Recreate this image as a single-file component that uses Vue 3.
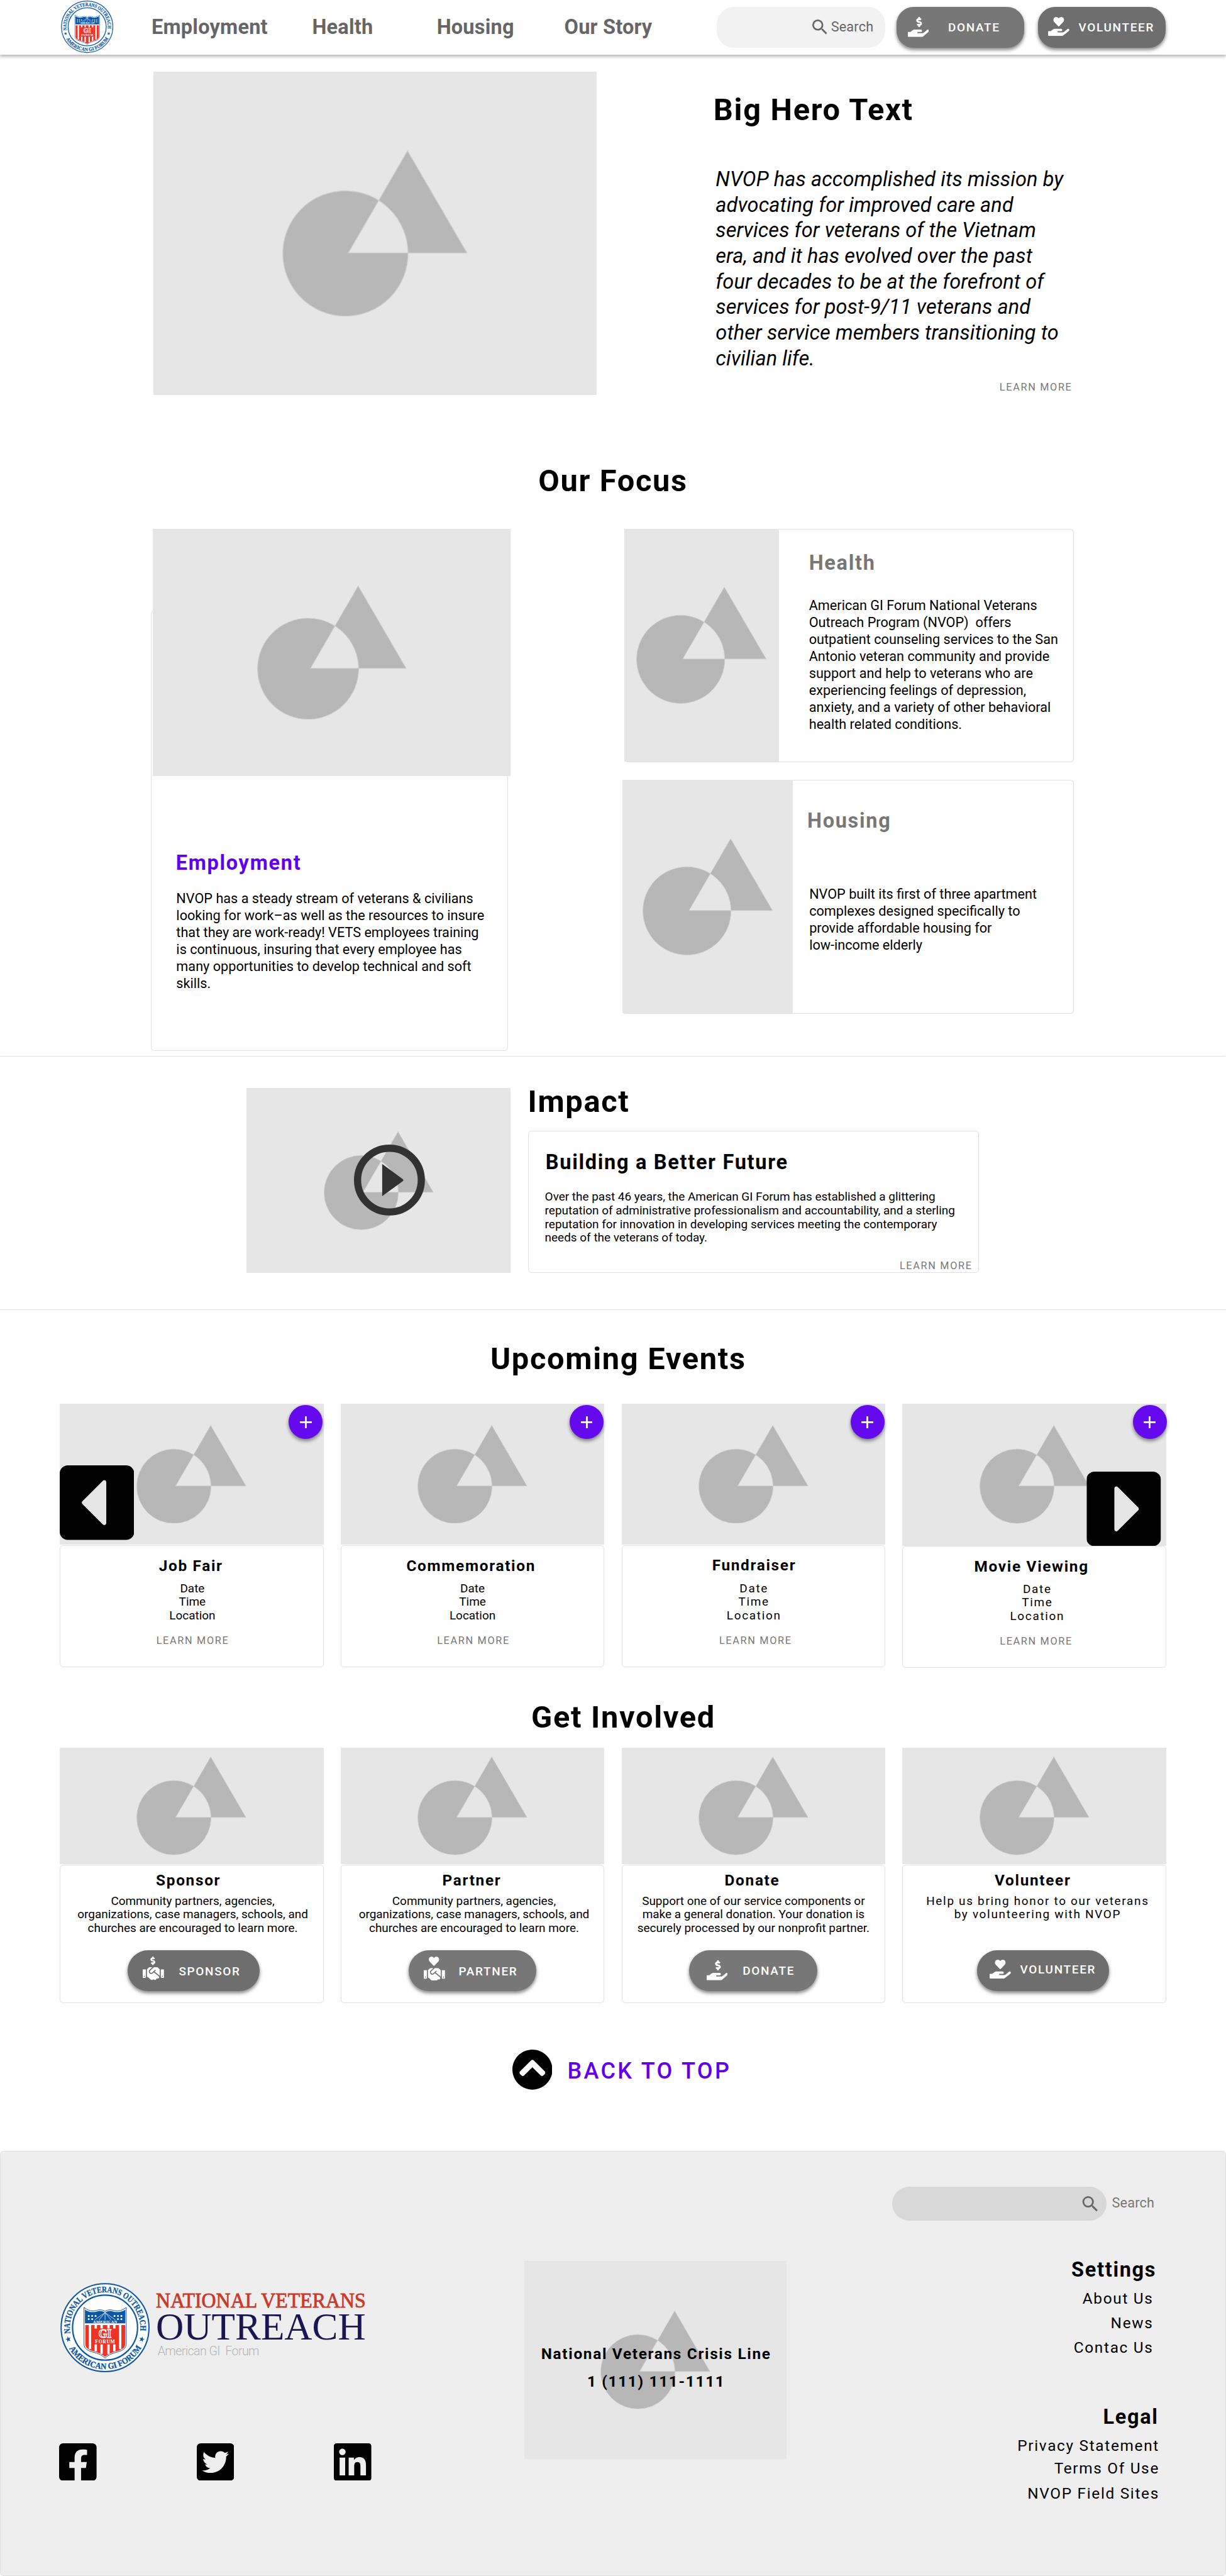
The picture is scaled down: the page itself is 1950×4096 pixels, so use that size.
<script setup>
import { h } from 'vue'

const HAND = 'M565.3 328.1c-11.8-10.7-30.2-10-42.6 0L430.3 402c-11.3 9.1-25.4 14-40 14H272c-8.8 0-16-7.2-16-16s7.2-16 16-16h78.3c15.9 0 30.7-10.9 33.3-26.6 3.3-20-12.1-37.4-31.6-37.4H192c-27 0-53.1 9.3-74.1 26.3L71.4 384H16c-8.8 0-16 7.2-16 16v96c0 8.8 7.2 16 16 16h356.8c14.5 0 28.6-4.9 40-14L564 377c15.2-12.1 16.4-35.3 1.3-48.9z'
const HAND_NARROW = 'M533.9 328.1c-11.2-10.7-28.5-10-40.3 0L406.4 402c-10.7 9.1-24 14-37.8 14H256.9c-8.3 0-15.1-7.2-15.1-16s6.8-16 15.1-16h73.9c15.1 0 29-10.9 31.4-26.6 3.1-20-11.5-37.4-29.8-37.4H181.3c-25.5 0-50.2 9.3-69.9 26.3L67.5 384H15.1C6.8 384 0 391.2 0 400v96c0 8.8 6.8 16 15.1 16H352c13.7 0 27-4.9 37.8-14l142.8-121c14.4-12.1 15.5-35.3 1.3-48.9z'
const HEART = 'M275.3 250.5c7 7.4 18.4 7.4 25.5 0l108.9-114.2c31.6-33.2 29.8-88.2-5.6-118.8-30.8-26.7-76.7-21.9-104.9 7.7L288 36.9l-11.1-11.6C248.7-4.4 202.8-9.2 172 17.5c-35.3 30.6-37.2 85.6-5.6 118.8l108.9 114.2z'
const DOLLAR = 'M257.6 144.3l50 14.3c3.6 1 6.1 4.4 6.1 8.1 0 4.6-3.8 8.4-8.4 8.4h-32.8c-3.6 0-7.1-.8-10.3-2.2-4.8-2.2-10.4-1.7-14.1 2l-17.5 17.5c-5.3 5.3-4.7 14.3 1.5 18.4 9.5 6.3 20.3 10.1 31.8 11.5V240c0 8.8 7.2 16 16 16h16c8.8 0 16-7.2 16-16v-17.6c30.3-3.6 53.3-31 49.3-63-2.9-23-20.7-41.3-42.9-47.7l-50-14.3c-3.6-1-6.1-4.4-6.1-8.1 0-4.6 3.8-8.4 8.4-8.4h32.8c3.6 0 7.1.8 10.3 2.2 4.8 2.2 10.4 1.7 14.1-2l17.5-17.5c5.3-5.3 4.7-14.3-1.5-18.4-9.5-6.3-20.3-10.1-31.8-11.5V16c0-8.8-7.2-16-16-16h-16c-8.8 0-16 7.2-16 16v17.6c-30.3 3.6-53.3 31-49.3 63 2.9 23 20.6 41.3 42.9 47.7z'
const SHAKE = 'M434.7 64h-85.9c-8 0-15.7 3-21.6 8.4l-98.3 90c-.1.1-.2.3-.3.4-16.6 15.6-16.3 40.5-2.1 56 12.7 13.9 39.4 17.6 56.1 2.7.1-.1.3-.1.4-.2l79.9-73.2c6.5-5.9 16.7-5.5 22.6 1 6 6.5 5.5 16.6-1 22.6l-26.1 23.9L504 313.8c2.9 2.4 5.5 5 7.9 7.7V128l-54.6-54.6c-5.9-6-14.1-9.4-22.6-9.4zM544 128.2v223.9c0 17.7 14.3 32 32 32h64V128.2h-96zm48 223.9c-8.8 0-16-7.2-16-16s7.2-16 16-16 16 7.2 16 16-7.2 16-16 16zM0 384h64c17.7 0 32-14.3 32-32V128.2H0V384zm48-63.9c8.8 0 16 7.2 16 16s-7.2 16-16 16-16-7.2-16-16c0-8.9 7.2-16 16-16zm435.9 18.6L334.6 217.5l-30 27.5c-29.7 27.1-75.2 24.5-101.7-4.4-26.9-29.4-24.8-74.9 4.4-101.7L289.1 64h-83.8c-8.5 0-16.6 3.4-22.6 9.4L128 128v223.9h18.3l90.5 81.9c27.4 22.3 67.7 18.1 90-9.3l.2-.2 17.9 15.5c15.9 13 39.4 10.5 52.3-5.4l31.4-38.6 5.4 4.4c13.7 11.1 33.9 9.1 45-4.7l9.5-11.7c11.2-13.8 9.1-33.9-4.6-45.1z'
const SQUARE_FB = 'M400 32H48A48 48 0 0 0 0 80v352a48 48 0 0 0 48 48h137.25V327.69h-63V256h63v-54.64c0-62.15 37-96.48 93.67-96.48 27.14 0 55.52 4.84 55.52 4.84v61h-31.27c-30.81 0-40.42 19.12-40.42 38.73V256h68.78l-11 71.69h-57.78V480H400a48 48 0 0 0 48-48V80a48 48 0 0 0-48-48z'
const SQUARE_TW = 'M400 32H48C21.5 32 0 53.5 0 80v352c0 26.5 21.5 48 48 48h352c26.5 0 48-21.5 48-48V80c0-26.5-21.5-48-48-48zm-48.9 158.8c.2 2.8.2 5.7.2 8.5 0 86.7-66 186.6-186.6 186.6-37.2 0-71.7-10.8-100.7-29.4 5.3.6 10.4.8 15.8.8 30.7 0 58.9-10.4 81.4-28-28.8-.6-53-19.5-61.3-45.5 10.1 1.5 19.2 1.5 29.6-1.2-30-6.1-52.5-32.5-52.5-64.4v-.8c8.7 4.9 18.9 7.9 29.6 8.3a65.447 65.447 0 0 1-29.2-54.6c0-12.2 3.2-23.4 8.9-33.1 32.3 39.8 80.8 65.8 135.2 68.6-9.3-44.5 24-80.6 64-80.6 18.9 0 35.9 7.9 47.9 20.7 14.8-2.8 29-8.3 41.6-15.8-4.9 15.2-15.2 28-28.8 36.1 13.2-1.4 26-5.1 37.8-10.2-8.9 13.1-20.1 24.7-32.9 34z'
const SQUARE_IN = 'M416 32H31.9C14.3 32 0 46.5 0 64.3v383.4C0 465.5 14.3 480 31.9 480H416c17.6 0 32-14.5 32-32.3V64.3c0-17.8-14.4-32.3-32-32.3zM135.4 416H69V202.2h66.5V416zm-33.2-243c-21.3 0-38.5-17.3-38.5-38.5S80.9 96 102.2 96c21.2 0 38.5 17.3 38.5 38.5 0 21.3-17.2 38.5-38.5 38.5zm282.1 243h-66.4V312c0-24.8-.5-56.7-34.5-56.7-34.6 0-39.9 27-39.9 54.9V416h-66.4V202.2h63.7v29.2h.9c8.9-16.8 30.6-34.5 62.9-34.5 67.2 0 79.7 44.3 79.7 101.9V416z'
const CARET = 'M400 480H48c-26.51 0-48-21.49-48-48V80c0-26.51 21.49-48 48-48h352c26.51 0 48 21.49 48 48v352c0 26.51-21.49 48-48 48zM259.515 124.485l-123.03 123.03c-4.686 4.686-4.686 12.284 0 16.971l123.029 123.029c7.56 7.56 20.485 2.206 20.485-8.485V132.971c.001-10.691-12.925-16.045-20.484-8.486z'
const CHEVRON = 'M8 256C8 119 119 8 256 8s248 111 248 248-111 248-248 248S8 393 8 256zm231-113.9L103.5 277.6c-9.4 9.4-9.4 24.6 0 33.9l17 17c9.4 9.4 24.6 9.4 33.9 0L256 226.9l101.6 101.6c9.4 9.4 24.6 9.4 33.9 0l17-17c9.4-9.4 9.4-24.6 0-33.9L273 142.1c-9.4-9.4-24.6-9.4-34 0z'
const SEARCH = 'M15.5 14h-.79l-.28-.27A6.47 6.47 0 0 0 16 9.5 6.5 6.5 0 1 0 9.5 16c1.61 0 3.09-.59 4.23-1.57l.27.28v.79l5 4.99L20.49 19l-4.99-5zm-6 0C7.01 14 5 11.99 5 9.5S7.01 5 9.5 5 14 7.01 14 9.5 11.99 14 9.5 14z'

/* Round organisation seal, drawn on a 104-unit square. */
const BLUE = '#0d56a6'
const RED = '#ee3224'
const SERIF = "'Liberation Serif', serif"
const STAR = 'M0-3.4L.8-1.1H3.2L1.3.4L2 2.8L0 1.4L-2 2.8L-1.3.4L-3.2-1.1H-.8Z'
const smallStars = [[33, 38.4], [37, 38.4], [41, 38.4], [33, 42], [37, 42], [71, 38.4], [67, 38.4], [63, 38.4], [71, 42], [67, 42]]
const Seal = () => {
  const p = (d, attrs) => h('path', { d, ...attrs })
  const onArc = (id, len, start, text) =>
    h('text', { fill: BLUE, stroke: BLUE, 'stroke-width': 0.25, 'font-family': SERIF, 'font-weight': 700, 'font-size': 10 }, [
      h('textPath', { href: id, startOffset: start, textLength: len, lengthAdjust: 'spacingAndGlyphs' }, text),
    ])
  const label = (y, size, attrs, text) =>
    h('text', { x: 52, y, 'font-size': size, 'font-weight': 700, 'font-family': SERIF, 'text-anchor': 'middle', ...attrs }, text)
  return h('svg', { viewBox: '0 0 104 104' }, [
    h('circle', { cx: 52, cy: 52, r: 51.1, fill: '#fff', stroke: BLUE, 'stroke-width': 1.5 }),
    h('circle', { cx: 52, cy: 52, r: 37.8, fill: 'none', stroke: BLUE, 'stroke-width': 1.6 }),
    onArc('#arc-top', 139, 4, 'NATIONAL VETERANS OUTREACH'),
    onArc('#arc-bottom', 102, 9, 'AMERICAN GI FORUM'),
    p(STAR, { fill: BLUE, transform: 'translate(9.2 65.5) rotate(-15)' }),
    p(STAR, { fill: BLUE, transform: 'translate(94.8 65.5) rotate(15)' }),
    p('M27.5 28.5Q34 34 42 32Q47 30 52 33Q57 30 62 32Q70 34 76.7 28.5V72Q76 78 66 80.5Q56 83 52 87.5Q48 83 38 80.5Q28 78 27.5 72Z', { fill: '#fff', stroke: BLUE, 'stroke-width': 0.7 }),
    p('M28.6 31Q35 35.3 42.5 33.2Q47 31.6 52 34.4Q57 31.6 61.5 33.2Q69 35.3 75.6 31V47H28.6Z', { fill: BLUE }),
    p('M52 34.5L40 43M52 34.5L45 43M52 34.5V43M52 34.5L59 43M52 34.5L64 43', { fill: 'none', stroke: '#cfe0f2', 'stroke-width': 0.7 }),
    ...smallStars.map(([x, y]) => h('circle', { cx: x, cy: y, r: 1.1, fill: '#fff' })),
    label(46.6, 4.6, { fill: '#fff', textLength: 28 }, 'AMERICAN'),
    p('M29 49H75.4V72Q75 77 65.5 79.5Q56 82 52 86Q48 82 38.5 79.5Q29.5 77 29 72Z', { fill: RED }),
    p('M34.4 49V77M41.2 49V79.6M48 49V82.5M56 49V82.5M62.8 49V79.6M69.6 49V77', { stroke: '#fff', 'stroke-width': 2.7 }),
    p('M39.5 53H64.5V71.5H39.5Z', { fill: RED }),
    label(63.6, 13, { fill: RED, stroke: '#fff', 'stroke-width': 0.9 }, 'GI'),
    label(70.4, 5.6, { fill: '#fff', textLength: 23 }, 'FORUM'),
  ])
}

const heroText = `NVOP has accomplished its mission by
advocating for improved care and
services for veterans of the Vietnam
era, and it has evolved over the past
four decades to be at the forefront of
services for post-9/11 veterans and
other service members transitioning to
civilian life.`
const employmentText = `NVOP has a steady stream of veterans & civilians
looking for work–as well as the resources to insure
that they are work-ready! VETS employees training
is continuous, insuring that every employee has
many opportunities to develop technical and soft
skills.`
const healthText = `American GI Forum National Veterans
Outreach Program (NVOP)\u00a0 offers
outpatient counseling services to the San
Antonio veteran community and provide
support and help to veterans who are
experiencing feelings of depression,
anxiety, and a variety of other behavioral
health related conditions.`
const housingText = `NVOP built its first of three apartment
complexes designed specifically to
provide affordable housing for
low-income elderly`
const impactText = `Over the past 46 years, the American GI Forum has established a glittering
reputation of administrative professionalism and accountability, and a sterling
reputation for innovation in developing services meeting the contemporary
needs of the veterans of today.`

const events = [
  { title: 'Job Fair', cls: 'e1' },
  { title: 'Commemoration', cls: 'e2' },
  { title: 'Fundraiser', cls: 'e3' },
  { title: 'Movie Viewing', cls: 'e4' },
]
const partnerText = `Community partners, agencies,
organizations, case managers, schools, and
churches are encouraged to learn more.`
const ways = [
  { title: 'Sponsor', cls: 'w1', icon: 'sponsor', text: partnerText },
  { title: 'Partner', cls: 'w2', icon: 'partner', text: partnerText },
  {
    title: 'Donate', cls: 'w3', icon: 'donate',
    text: `Support one of our service components or
make a general donation. Your donation is
securely processed by our nonprofit partner.`,
  },
  {
    title: 'Volunteer', cls: 'w4', icon: 'volunteer',
    text: `Help us bring honor to our veterans
by volunteering with NVOP`,
  },
]
const social = [SQUARE_FB, SQUARE_TW, SQUARE_IN]
</script>

<template>
  <div class="page">
    <svg class="defs" width="0" height="0" aria-hidden="true">
      <defs>
        <path id="arc-top" d="M12.4 62.5A41 41 0 1 1 91.6 62.5" />
        <path id="arc-bottom" d="M6.5 68A48.2 48.2 0 0 0 97.5 68" />
      </defs>
      <symbol id="shape" viewBox="-1 -1 352 316">
        <path
          d="M0 195a119 119 0 1 0 238 0a119 119 0 1 0 -238 0zM124.5 194L237 0L350 194z"
          fill="#b7b7b7" fill-rule="evenodd" stroke="#cdcdcd" stroke-width="1.6"
        />
      </symbol>
      <symbol id="donate" viewBox="0 0 544 512">
        <path :d="DOLLAR" /><path :d="HAND_NARROW" />
      </symbol>
      <symbol id="volunteer" viewBox="0 0 576 512">
        <path :d="HEART" /><path :d="HAND" />
      </symbol>
      <symbol id="sponsor" viewBox="0 0 25 28">
        <path :d="DOLLAR" transform="translate(.7 0) scale(.039)" />
        <path :d="SHAKE" transform="translate(0 10.1) scale(.03906)" />
      </symbol>
      <symbol id="partner" viewBox="0 0 25 28">
        <path :d="HEART" transform="translate(-.1 .2) scale(.042)" />
        <path :d="SHAKE" transform="translate(0 11.1) scale(.03906)" />
      </symbol>
    </svg>

    <header class="bar">
      <Seal class="logo" />
      <nav class="nav">
        <a class="n1">Employment</a><a class="n2">Health</a><a class="n3">Housing</a><a>Our Story</a>
      </nav>
      <div class="search">
        <svg viewBox="3 3 17.5 17.5"><path :d="SEARCH" /></svg><span>Search</span>
      </div>
      <button class="btn light top-donate"><svg><use href="#donate" /></svg><span>DONATE</span></button>
      <button class="btn top-volunteer"><svg><use href="#volunteer" /></svg><span>VOLUNTEER</span></button>
    </header>

    <section class="hero">
      <div class="ph hero-img"><svg><use href="#shape" /></svg></div>
      <div class="hero-copy">
        <h1 class="big">Big Hero Text</h1>
        <p>{{ heroText }}</p>
        <a class="learn">LEARN MORE</a>
      </div>
    </section>

    <section class="focus">
      <h2 class="big">Our Focus</h2>
      <div class="focus-row">
        <article class="job card">
          <div class="ph"><svg><use href="#shape" /></svg></div>
          <h3>Employment</h3>
          <p class="body">{{ employmentText }}</p>
        </article>
        <div class="focus-side">
          <article class="side health card">
            <div class="ph"><svg><use href="#shape" /></svg></div>
            <div><h3>Health</h3><p class="body">{{ healthText }}</p></div>
          </article>
          <article class="side housing card">
            <div class="ph"><svg><use href="#shape" /></svg></div>
            <div><h3>Housing</h3><p class="body">{{ housingText }}</p></div>
          </article>
        </div>
      </div>
    </section>

    <section class="impact">
      <div class="ph video">
        <svg><use href="#shape" /></svg>
        <svg class="play" viewBox="0 0 83 83">
          <circle cx="41.5" cy="41.5" r="37.3" fill="none" stroke="#323232" stroke-width="8.4" />
          <path d="M33 22.6L57 40.2Q58.6 41.5 57 42.8L33 60.4Z" fill="#323232" />
        </svg>
      </div>
      <div class="impact-copy">
        <h2 class="big">Impact</h2>
        <article class="card">
          <h3>Building a Better Future</h3>
          <p>{{ impactText }}</p>
          <a class="learn">LEARN MORE</a>
        </article>
      </div>
    </section>

    <section class="events">
      <h2 class="big">Upcoming Events</h2>
      <div class="cards">
        <article v-for="e in events" :key="e.title" class="tile" :class="e.cls">
          <div class="ph"><svg><use href="#shape" /></svg></div>
          <button class="fab"><svg viewBox="0 0 14 14"><path d="M6 0h2v6h6v2H8v6H6V8H0V6h6z" /></svg></button>
          <div class="card">
            <h4>{{ e.title }}</h4>
            <p>Date<br />Time<br />Location</p>
            <a class="learn">LEARN MORE</a>
          </div>
        </article>
        <svg class="arrow prev" viewBox="0 32 448 448"><path d="M120 110H290V400H120Z" fill="#e6e6e6" /><path :d="CARET" /></svg>
        <svg class="arrow next" viewBox="0 32 448 448"><path d="M120 110H290V400H120Z" fill="#e6e6e6" /><path :d="CARET" /></svg>
      </div>
    </section>

    <section class="involved">
      <h2 class="big">Get Involved</h2>
      <div class="cards">
        <article v-for="w in ways" :key="w.title" class="tile" :class="w.cls">
          <div class="ph"><svg><use href="#shape" /></svg></div>
          <div class="card">
            <h4>{{ w.title }}</h4>
            <p>{{ w.text }}</p>
            <button class="btn"><svg><use :href="'#' + w.icon" /></svg><span>{{ w.title.toUpperCase() }}</span></button>
          </div>
        </article>
      </div>
    </section>

    <a class="back">
      <svg viewBox="8 8 496 496"><path :d="CHEVRON" /></svg>
      <span>BACK TO TOP</span>
    </a>

    <footer class="foot">
      <div class="foot-brand">
        <div class="brand">
          <Seal class="seal" />
          <svg class="word" viewBox="0 0 250 104">
            <g font-family="'Liberation Serif', serif">
              <text x="0" y="29" font-size="24.4" fill="#cb392b" stroke="#cb392b" stroke-width=".6" textLength="246.5" lengthAdjust="spacingAndGlyphs">NATIONAL VETERANS</text>
              <text x="0" y="66.1" font-size="46" fill="#1b1650" textLength="246.5" lengthAdjust="spacingAndGlyphs">OUTREACH</text>
            </g>
            <text x="2" y="84.7" font-size="14.5" font-weight="300" font-family="Roboto, sans-serif" fill="#b4b4b4" textLength="119.5">American GI&#160; Forum</text>
          </svg>
        </div>
        <div class="social">
          <svg v-for="(d, i) in social" :key="i" viewBox="0 32 448 448"><path :d="d" /></svg>
        </div>
      </div>
      <div class="ph crisis">
        <svg><use href="#shape" /></svg>
        <div class="crisis-copy"><span>National Veterans Crisis Line</span><span>1 (111) 111-1111</span></div>
      </div>
      <div class="foot-right">
        <div class="foot-search">
          <div class="pill"><svg viewBox="3 3 17.5 17.5"><path :d="SEARCH" /></svg></div>
          <span>Search</span>
        </div>
        <ul class="links settings">
          <li class="head">Settings</li><li>About Us</li><li>News</li><li>Contac Us</li>
        </ul>
        <ul class="links legal">
          <li class="head">Legal</li><li>Privacy Statement</li><li>Terms Of Use</li><li>NVOP Field Sites</li>
        </ul>
      </div>
    </footer>
  </div>
</template>

<style>
html, body { margin: 0; background: #fff; }
</style>

<style scoped>
/* The design is drawn on a 1440-unit grid and scaled up to the 1950px window. */
.page {
  zoom: 1.3541667;
  width: 1440px;
  height: 3025px;
  overflow: hidden;
  font-family: Roboto, sans-serif;
  color: #000;
  display: flex;
  flex-direction: column;
  --ls: 1.25px;
}
.page * { box-sizing: border-box; }
.defs { position: absolute; }
h1, h2, h3, h4, p, ul { margin: 0; padding: 0; }
h3 { font-size: 24px; line-height: 28px; font-weight: 700; letter-spacing: var(--ls); }
p { white-space: pre-line; }
.big { font-size: 36px; line-height: 43px; margin-bottom: -1px; font-weight: 700; letter-spacing: var(--ls); white-space: nowrap; }
.learn { display: block; font-size: 12px; line-height: 16px; letter-spacing: var(--ls); color: #777; white-space: nowrap; }
.body { font-size: 16px; line-height: 20px; white-space: pre-line; }
.card { border: 1px solid #e0e0e0; border-radius: 4px; }
.ph { background: #e6e6e6; display: flex; align-items: center; justify-content: center; flex: none; }
.ph > svg { width: 129px; height: 115.8px; flex: none; }

.bar { height: 64px; flex: none; display: flex; background: #fff; position: relative; z-index: 2;
  box-shadow: 0 2px 4px rgba(0,0,0,.24), 0 3px 4px rgba(0,0,0,.12); }
.logo { width: 61.5px; height: 61.5px; margin: 1px 0 0 71.5px; flex: none; }
.nav { display: flex; width: 664px; margin-left: 45px; padding-top: 18.2px; font-size: 24px; line-height: 28px; font-weight: 700; letter-spacing: .15px; color: #666; white-space: nowrap; }
.n1 { width: 188.6px; }
.n2 { width: 146.4px; }
.n3 { width: 149.8px; }
.search { width: 198px; height: 48px; margin-top: 8px; border-radius: 20px; background: #f2f2f2; color: #666; display: flex; padding: 15px 0 0 112px; flex: none; font-size: 16px; }
.search svg { width: 17.4px; height: 17.4px; fill: #666; }
.search span { margin-left: 4.6px; line-height: 18px; letter-spacing: .15px; }
.btn { border: 0; height: 48px; border-radius: 20px; background: #6e6e6e; color: #fff; display: flex; padding: 0; flex: none; font: 500 14px/16px Roboto, sans-serif; letter-spacing: var(--ls);
  box-shadow: 0 2px 4px rgba(0,0,0,.34), 0 3px 5px rgba(0,0,0,.2); white-space: nowrap; }
.btn svg { width: 25px; height: 22.3px; fill: #fff; flex: none; }
.btn.light { background: #777; }
.top-donate { width: 150px; margin: 8px 0 0 13px; padding: 12.3px 0 0 13px; }
.top-donate svg { height: 23.5px; }
.top-donate span { margin: 3.9px 0 0 22.6px; }
.top-volunteer { width: 150px; margin: 8px 0 0 16px; padding: 12.3px 0 0 12px; }
.top-volunteer span { margin: 3.9px 0 0 10.8px; }

.hero { height: 400px; padding: 20px 0 0 180px; display: flex; flex: none; }
.hero-img { width: 520.7px; height: 380px; }
.hero-img > svg { width: 217.5px; height: 195.3px; }
.hero-copy { margin-left: 137.3px; padding-top: 23.7px; }
.hero-copy p { font-size: 24px; line-height: 30px; font-style: italic; letter-spacing: .08px; margin: 46.1px 0 0 2.6px; }
.hero-copy .learn { margin: 11.1px 0 0 336px; }

.focus { height: 776px; padding-top: 79.5px; flex: none; }
.focus .big { text-align: center; }
.focus-row { display: flex; margin: 35.5px 0 0 177px; }
.job { width: 420px; height: 517px; margin-top: 96px; flex: none; }
.job .ph { width: 420px; height: 290.5px; margin: -97px 0 0 2px; }
.job .ph > svg { width: 175.5px; height: 157.6px; }
.job h3 { color: #6200ee; margin: 88.6px 0 0 28.8px; }
.job p { margin: 16.8px 0 0 29.3px; }
.focus-side { margin-left: 134px; width: 530px; }
.side { display: flex; border-left: 0; color: #000; }
.side .ph > svg { width: 153px; height: 137.4px; }
.side h3 { color: #777; }
.health { margin-left: 2px; height: 273.7px; }
.health .ph { width: 182px; height: 273.7px; margin-top: -1px; }
.health h3 { margin: 25.7px 0 0 35.2px; }
.health p { margin: 25.1px 0 0 35.2px; }
.housing { margin-top: 21.3px; height: 274.3px; }
.housing .ph { width: 200px; height: 274.3px; margin-top: -1px; }
.housing h3 { margin: 33.5px 0 0 17.2px; }
.housing p { margin: 61.5px 0 0 19.5px; }

.impact { height: 298px; flex: none; border: 1px solid #e0e0e0; border-left-color: transparent; border-right-color: transparent; display: flex; padding: 37px 0 0 289px; }
.video { width: 310px; height: 217px; position: relative; }
.video .play { position: absolute; left: 126.3px; top: 66.5px; width: 83.3px; height: 83.3px; }
.impact-copy { margin-left: 20.7px; }
.impact-copy .big { margin-top: -5px; margin-left: -.5px; }
.impact-copy .card { width: 529px; height: 167px; margin-top: 13px; }
.impact-copy h3 { margin: 22.6px 0 0 19.7px; }
.impact-copy p { font-size: 14px; line-height: 16px; margin: 18.4px 0 0 18.8px; }
.impact-copy .learn { margin: 16.7px 0 0 435.5px; }

.events { height: 420px; flex: none; padding-top: 36.7px; }
.events .big { margin-left: 576px; }
.cards { display: flex; gap: 20px; margin-left: 70px; position: relative; width: 1300px; }
.events .cards { margin-top: 31.3px; }
.tile { width: 310px; position: relative; text-align: center; }
.tile h4 { font-size: 18px; line-height: 22px; font-weight: 700; letter-spacing: var(--ls); }
.tile p { font-size: 14px; line-height: 16px; }
.events .ph { height: 166px; }
.events .card { margin-top: .5px; height: 143.3px; padding-top: 12.4px; }
.events p { margin-top: 7.4px; }
.events .learn { margin-top: 13.4px; }
.e1 h4 { margin-left: -1.4px; }
.e2 h4 { margin-left: -3.4px; }
.e3 h4 { margin: -1px 0 0 1.6px; }
.e4 h4 { margin-left: -6.8px; }
.e1 p { margin-left: 1.8px; }
.e1 .learn { margin-left: 2.8px; }
.e2 .learn { margin-left: 2.2px; }
.e3 .learn { margin-left: 5px; }
.e4 .learn { margin-left: 4.2px; }
.e3 p { letter-spacing: var(--ls); margin: 8.4px 0 0 1.2px; }
.e4 p { letter-spacing: var(--ls); margin-left: 6.8px; }
.events .e4 .ph { height: 166.8px; }
.fab { position: absolute; right: 1px; top: 2px; width: 40px; height: 40px; border: 0; border-radius: 50%; padding: 0; background: #6509ee; display: flex; align-items: center; justify-content: center; box-shadow: 0 2px 4px rgba(0,0,0,.3), 0 3px 5px rgba(0,0,0,.2); }
.fab svg { width: 14px; height: 14px; fill: #fff; }
.e4 .fab { right: -.4px; }
.arrow { position: absolute; width: 87.5px; height: 87.5px; }
.prev { left: 0; top: 73px; }
.next { left: 1206.3px; top: 80px; transform: scaleX(-1); }

.involved { height: 395px; flex: none; padding-top: 37.7px; }
.involved .big { margin-left: 624px; }
.involved .cards { margin-top: 14.3px; }
.involved .ph { height: 137px; }
.involved .card { margin-top: .4px; height: 163px; padding-top: 6.9px; display: flex; flex-direction: column; }
.involved p { margin-top: 5.1px; height: 48px; }
.w1 h4 { margin-left: -7.4px; }
.w2 h4 { margin-left: -1.6px; }
.w3 h4 { margin-left: -2.8px; }
.w4 h4 { margin-left: -3.6px; }
.w1 p { margin-left: 2.8px; }
.w2 p { margin-left: 3.6px; }
.w4 p { margin-left: 7.6px; letter-spacing: var(--ls); }
.involved .btn { border-radius: 24px; margin: 17.6px 0 0 79px; width: 150px; padding: 8px 0 0 18px; }
.w1 .btn svg, .w2 .btn svg { height: 28px; }
.involved .w1 .btn { width: 155px; }
.w1 .btn span { margin: 9.2px 0 0 17.3px; }
.w2 .btn span { margin: 9.2px 0 0 16px; }
.w2 .btn, .w3 .btn { background: #777; }
.involved .w3 .btn { padding: 12.3px 0 0 20px; }
.w3 .btn svg { height: 23.5px; }
.w3 .btn span { margin: 3.9px 0 0 17.6px; }
.involved .w4 .btn { width: 155px; margin-left: 87px; padding: 11px 0 0 14.7px; }
.w4 .btn span { margin: 4.2px 0 0 10.8px; }

.back { display: flex; height: 172.5px; flex: none; padding: 54px 0 0 601.6px; color: #6200ee; font-size: 26.6px; line-height: 30px; font-weight: 500; letter-spacing: 2.45px; white-space: nowrap; }
.back svg { width: 47px; height: 47px; fill: #000; flex: none; }
.back span { margin: 9.9px 0 0 17.8px; }

.foot { height: 499.5px; flex: none; background: #eee; border: 1px solid #e1e1e1; border-radius: 4px; display: flex; }
.foot-brand { width: 615px; padding: 154.3px 0 0 70px; flex: none; }
.brand { display: flex; }
.seal { width: 105px; height: 105px; }
.word { width: 250px; height: 104px; margin-left: 7.7px; overflow: visible; }
.social { display: flex; gap: 117.3px; margin: 83.2px 0 0 -1px; }
.social svg { width: 44px; height: 44px; }
.crisis { width: 308px; height: 233px; margin-top: 128.5px; position: relative; }
.crisis-copy { position: absolute; inset: 98.5px 0 auto 2px; display: flex; flex-direction: column; gap: 10px; text-align: center; font-size: 18px; line-height: 22px; font-weight: 700; letter-spacing: var(--ls); white-space: nowrap; }
.foot-right { margin-left: 124px; width: 314px; padding-top: 41.5px; }
.foot-search { display: flex; font-size: 16px; color: #777; letter-spacing: .15px; }
.pill { width: 252px; height: 40px; border-radius: 20px; background: #d8d8d8; padding: 11px 0 0 223px; flex: none; }
.pill svg { width: 19px; height: 18px; display: block; fill: #666; }
.foot-search span { margin: 10.5px 0 0 6.2px; line-height: 18px; }
.links { list-style: none; text-align: right; font-size: 18px; line-height: 22px; letter-spacing: var(--ls); white-space: nowrap; }
.links .head { font-size: 24px; line-height: 28px; font-weight: 700; }
.settings { margin: 44px 7px 0 0; }
.settings .head { margin-right: -3.5px; }
.settings li + li { margin-top: 6.8px; }
.settings .head + li { margin-top: 8px; }
.legal { margin: 57.4px 0 0; }
.legal .head { margin-right: 1px; }
.legal .head + li { margin-top: 8px; }
.legal li:nth-child(3) { margin-top: 4.5px; }
.legal li:nth-child(4) { margin-top: 7.5px; }
</style>
